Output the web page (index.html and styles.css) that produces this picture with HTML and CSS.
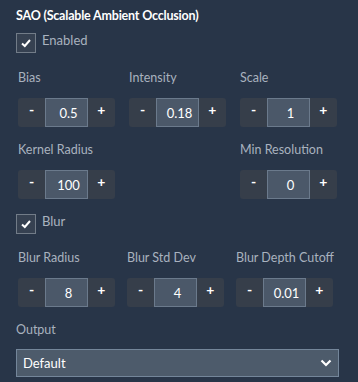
FILE: index.html
```html
<!DOCTYPE html>
<html lang="en">
<head>
    <meta charset="UTF-8">
    <meta name="viewport" content="width=device-width, initial-scale=1.0">
    <title>SAO Settings</title>
    <link rel="stylesheet" href="styles.css">
</head>
<body>
    <section class="panel">
        <h3 class="title">SAO (Scalable Ambient Occlusion)</h3>

        <label class="check">
            <span class="box">
                <svg viewBox="0 0 12 12" width="12" height="12"><path d="M2 6.5 L4.8 9 L10 3" fill="none" stroke="#fff" stroke-width="2"/></svg>
            </span>
            <span>Enabled</span>
        </label>

        <div class="row row-a">
            <div class="field">
                <span class="label">Bias</span>
                <div class="stepper"><button>-</button><span class="value">0.5</span><button>+</button></div>
            </div>
            <div class="field">
                <span class="label">Intensity</span>
                <div class="stepper"><button>-</button><span class="value">0.18</span><button>+</button></div>
            </div>
            <div class="field">
                <span class="label">Scale</span>
                <div class="stepper"><button>-</button><span class="value">1</span><button>+</button></div>
            </div>
        </div>

        <div class="row row-b">
            <div class="field">
                <span class="label">Kernel Radius</span>
                <div class="stepper"><button>-</button><span class="value">100</span><button>+</button></div>
            </div>
            <div class="field">
                <span class="label">Min Resolution</span>
                <div class="stepper"><button>-</button><span class="value">0</span><button>+</button></div>
            </div>
        </div>

        <label class="check check-blur">
            <span class="box">
                <svg viewBox="0 0 12 12" width="12" height="12"><path d="M2 6.5 L4.8 9 L10 3" fill="none" stroke="#fff" stroke-width="2"/></svg>
            </span>
            <span>Blur</span>
        </label>

        <div class="row row-c">
            <div class="field">
                <span class="label">Blur Radius</span>
                <div class="stepper"><button>-</button><span class="value">8</span><button>+</button></div>
            </div>
            <div class="field">
                <span class="label">Blur Std Dev</span>
                <div class="stepper"><button>-</button><span class="value">4</span><button>+</button></div>
            </div>
            <div class="field">
                <span class="label">Blur Depth Cutoff</span>
                <div class="stepper"><button>-</button><span class="value">0.01</span><button>+</button></div>
            </div>
        </div>

        <div class="output">
            <span class="label">Output</span>
            <div class="select">
                <span>Default</span>
                <svg viewBox="0 0 12 8" width="12" height="8"><path d="M1.5 1.5 L6 6 L10.5 1.5" fill="none" stroke="#fff" stroke-width="2.2"/></svg>
            </div>
        </div>
    </section>
</body>
</html>
```

FILE: styles.css
```css
body {
    background-color: #283548;
    font-family: Lato, "Noto Sans", sans-serif;
    margin: 0;
    padding: 0;
    color: #a9b2bf;
}
.panel {
    padding: 7px 16px 0 16px;
}
.title {
    margin: 0;
    color: #fff;
    font-size: 12.5px;
    letter-spacing: -0.2px;
    font-weight: bold;
    line-height: 17px;
}
.check {
    display: flex;
    align-items: flex-start;
    gap: 6px;
    margin-top: 9px;
    font-size: 13px;
    line-height: 14px;
}
.check .box {
    width: 18px;
    height: 18px;
    border: 1px solid #727c88;
    background: #364151;
    display: flex;
    align-items: center;
    justify-content: center;
}
.check-blur {
    margin-top: 15px;
}
.row {
    display: flex;
    padding-left: 2px;
}
.row-a {
    margin-top: 19px;
    gap: 14px;
}
.row-b {
    margin-top: 17px;
    justify-content: space-between;
    padding-right: 5px;
}
.row-c {
    margin-top: 18px;
    gap: 12px;
}
.field {
    display: flex;
    flex-direction: column;
    gap: 14px;
}
.label {
    font-size: 12.5px;
    line-height: 12px;
    color: #a9b2bf;
}
.stepper {
    display: flex;
    width: 97px;
    height: 29px;
    background: #363e4a;
    border-radius: 3px;
}
.stepper button {
    width: 28px;
    border: none;
    background: none;
    color: #fff;
    font-family: inherit;
    font-size: 14px;
    font-weight: bold;
    padding: 3px 0 0 0;
    display: flex;
    justify-content: center;
    align-items: flex-start;
}
.stepper .value {
    width: 37px;
    border: 1px solid #6b7a8c;
    background: #4b5869;
    color: #fff;
    font-size: 13px;
    display: flex;
    align-items: center;
    justify-content: center;
    padding-left: 4px;
}
.output {
    margin-top: 17px;
    display: flex;
    flex-direction: column;
    gap: 13px;
}
.select {
    width: 323px;
    height: 28px;
    box-sizing: border-box;
    border: 1px solid #74869a;
    background: #4d5b6b;
    color: #fff;
    font-size: 13px;
    display: flex;
    align-items: center;
    justify-content: space-between;
    padding: 0 6px 0 6px;
}
```
